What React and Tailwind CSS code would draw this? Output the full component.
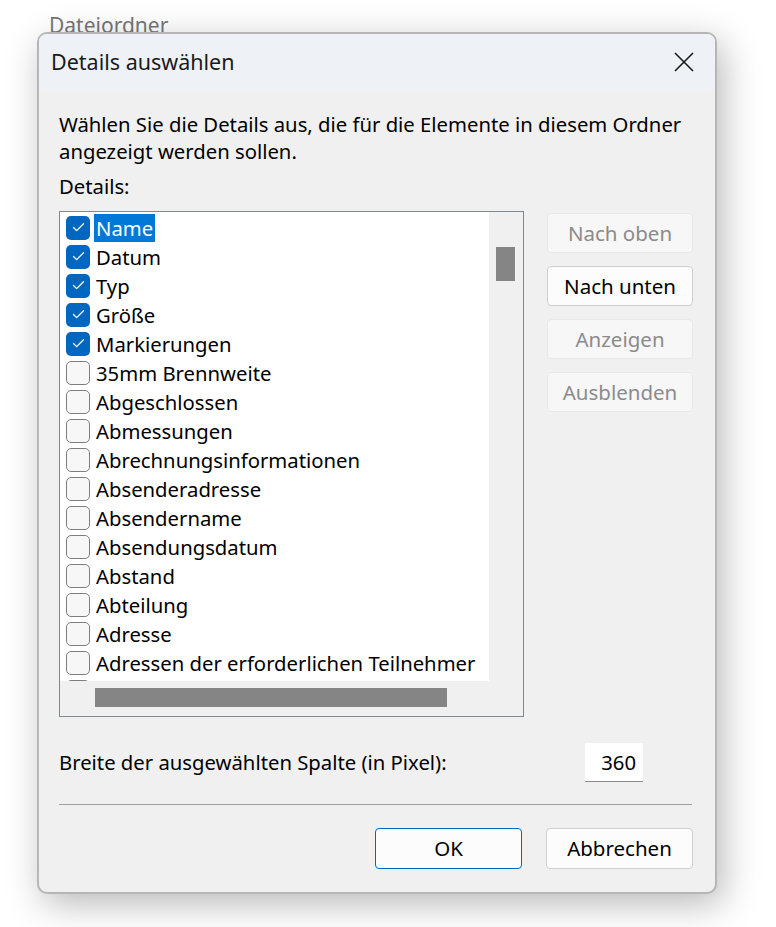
import { Check } from "lucide-react";

const ROWS = [
  { label: "Name", checked: true, selected: true },
  { label: "Datum", checked: true },
  { label: "Typ", checked: true },
  { label: "Größe", checked: true },
  { label: "Markierungen", checked: true },
  { label: "35mm Brennweite" },
  { label: "Abgeschlossen" },
  { label: "Abmessungen" },
  { label: "Abrechnungsinformationen" },
  { label: "Absenderadresse" },
  { label: "Absendername" },
  { label: "Absendungsdatum" },
  { label: "Abstand" },
  { label: "Abteilung" },
  { label: "Adresse" },
  { label: "Adressen der erforderlichen Teilnehmer" },
  { label: "" },
];

function Checkbox({ checked }) {
  if (checked) {
    return (
      <span className="flex h-[24px] w-[24px] shrink-0 items-center justify-center rounded-[5px] bg-[#0067c0]">
        <Check className="h-[15px] w-[15px] text-white" strokeWidth={2} />
      </span>
    );
  }
  return (
    <span className="h-[24px] w-[24px] shrink-0 rounded-[5px] border-[1.5px] border-[#7e7e7e] bg-[#f7f7f7]" />
  );
}

function SideButton({ children, disabled }) {
  return (
    <button
      className={`h-[40px] w-[146px] rounded-[4px] border text-[20.5px] ${
        disabled
          ? "border-[#e8e8e8] bg-[#f7f7f7] text-[#8b8b8b]"
          : "border-[#cfcfcf] bg-[#fcfcfc] text-black"
      }`}
    >
      {children}
    </button>
  );
}

export default function App() {
  return (
    <div
      className="relative h-[927px] w-[776px] overflow-hidden bg-white"
      style={{ fontFamily: '"Noto Sans", "Open Sans", sans-serif' }}
    >
      <div className="pl-[49px] pt-[11px] text-[21px] leading-[28px] text-[#777]">Dateiordner</div>

      <div className="relative z-10 ml-[37px] mt-[-7px] w-[680px] overflow-hidden rounded-[10px] border-2 border-[#b6b6b6] bg-[#f0f0f0] shadow-[6px_10px_36px_rgba(0,0,0,0.28)]">
        <div className="flex h-[56px] items-center justify-between bg-[#eef2f6] pl-[12px] pr-[20px]">
          <span className="text-[21.5px] text-[#1a1a1a]">Details auswählen</span>
          <svg width="22" height="22" viewBox="0 0 22 22" className="text-[#1a1a1a]">
            <path d="M2 2 L20 20 M20 2 L2 20" stroke="currentColor" strokeWidth="1.6" />
          </svg>
        </div>

        <div className="px-[20px] pb-[23px] pt-[21px] text-[20.3px] text-black">
          <p className="leading-[27px]">
            Wählen Sie die Details aus, die für die Elemente in diesem Ordner
            <br />
            angezeigt werden sollen.
          </p>
          <p className="mt-[8px] leading-[27px]">Details:</p>

          <div className="mt-[11px] flex gap-[23px]">
            <div className="flex h-[506px] w-[465px] flex-col border border-[#828790]">
              <div className="flex h-[469px]">
                <div className="w-[429px] overflow-hidden bg-white pt-[1px]">
                  {ROWS.map((r, i) => (
                    <div key={i} className="flex h-[29px] items-center pl-[6px]">
                      <Checkbox checked={r.checked} />
                      {r.label ? (
                        <span
                          className={`ml-[4px] whitespace-nowrap px-[2px] leading-[28px] ${
                            r.selected ? "bg-[#0078d7] text-white" : ""
                          }`}
                        >
                          {r.label}
                        </span>
                      ) : null}
                    </div>
                  ))}
                </div>
                <div className="flex-1 bg-[#f0f0f0] pl-[7px] pt-[35px]">
                  <div className="h-[34px] w-[19px] bg-[#858585]" />
                </div>
              </div>
              <div className="flex-1 bg-[#f0f0f0] pl-[35px] pt-[7px]">
                <div className="h-[19px] w-[352px] bg-[#858585]" />
              </div>
            </div>

            <div className="flex flex-col gap-[13px] pt-[2px]">
              <SideButton disabled>Nach oben</SideButton>
              <SideButton>Nach unten</SideButton>
              <SideButton disabled>Anzeigen</SideButton>
              <SideButton disabled>Ausblenden</SideButton>
            </div>
          </div>

          <div className="mt-[26px] flex items-center">
            <span className="w-[526px]">Breite der ausgewählten Spalte (in Pixel):</span>
            <div className="flex h-[39px] w-[58px] items-center justify-end border-b border-[#8a8a8a] bg-white pr-[7px]">
              360
            </div>
          </div>

          <div className="mt-[22px] h-px w-[633px] bg-[#a0a0a0]" />

          <div className="mt-[23px] flex justify-end gap-[24px] pr-[2px]">
            <button className="h-[41px] w-[147px] rounded-[4px] border border-[#0067c0] bg-[#fcfcfc] text-[20.5px]">
              OK
            </button>
            <button className="h-[41px] w-[147px] rounded-[4px] border border-[#cfcfcf] bg-[#fcfcfc] text-[20.5px]">
              Abbrechen
            </button>
          </div>
        </div>
      </div>
    </div>
  );
}
